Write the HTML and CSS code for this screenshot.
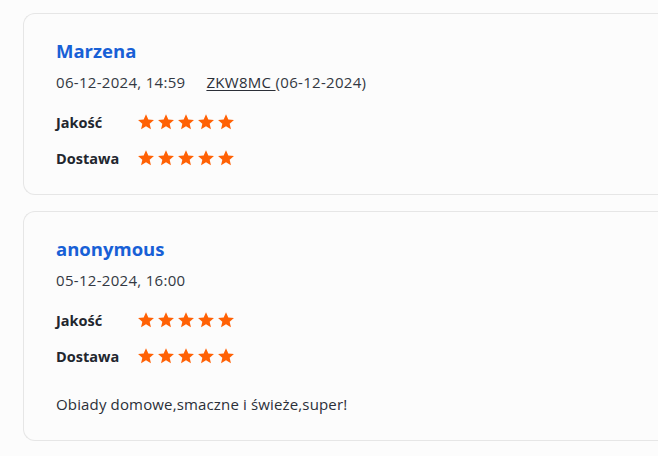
FILE: index.html
```html
<!DOCTYPE html>
<html lang="pl">
<head>
<meta charset="utf-8">
<link rel="stylesheet" href="styles.css">
</head>
<body>
<svg width="0" height="0" class="defs" aria-hidden="true">
  <defs>
    <symbol id="star" viewBox="0 0 24 24">
      <path d="M12 1.6l3.1 6.9 7.5.7-5.7 5 1.7 7.4L12 17.8l-6.6 3.8 1.7-7.4-5.7-5 7.5-.7z"/>
    </symbol>
  </defs>
</svg>
<main class="list">
  <article class="review">
    <h3 class="author">Marzena</h3>
    <div class="meta">
      <span class="date">06-12-2024, 14:59</span>
      <span class="order"><a class="order-link" href="#">ZKW8MC </a>(06-12-2024)</span>
    </div>
    <div class="ratings">
      <div class="rating"><span class="label">Jakość</span><span class="stars"><svg><use href="#star"/></svg><svg><use href="#star"/></svg><svg><use href="#star"/></svg><svg><use href="#star"/></svg><svg><use href="#star"/></svg></span></div>
      <div class="rating"><span class="label">Dostawa</span><span class="stars"><svg><use href="#star"/></svg><svg><use href="#star"/></svg><svg><use href="#star"/></svg><svg><use href="#star"/></svg><svg><use href="#star"/></svg></span></div>
    </div>
  </article>
  <article class="review">
    <h3 class="author">anonymous</h3>
    <div class="meta">
      <span class="date">05-12-2024, 16:00</span>
    </div>
    <div class="ratings">
      <div class="rating"><span class="label">Jakość</span><span class="stars"><svg><use href="#star"/></svg><svg><use href="#star"/></svg><svg><use href="#star"/></svg><svg><use href="#star"/></svg><svg><use href="#star"/></svg></span></div>
      <div class="rating"><span class="label">Dostawa</span><span class="stars"><svg><use href="#star"/></svg><svg><use href="#star"/></svg><svg><use href="#star"/></svg><svg><use href="#star"/></svg><svg><use href="#star"/></svg></span></div>
    </div>
    <p class="comment">Obiady domowe,smaczne i świeże,super!</p>
  </article>
</main>
</body>
</html>
```
FILE: styles.css
```css
html, body {
  margin: 0;
  padding: 0;
  background: #fcfcfc;
}
body {
  font-family: "Open Sans", "Noto Sans", sans-serif;
  color: #2b2f38;
  width: 658px;
  height: 456px;
  overflow: hidden;
}
.defs {
  position: absolute;
}
.list {
  display: flex;
  flex-direction: column;
  gap: 16px;
  padding: 13px 0 0 23px;
  width: 658px;
  box-sizing: border-box;
}
.review {
  border: 1px solid #e6e6e6;
  border-right: none;
  border-radius: 12px 0 0 12px;
  background: #fcfcfc;
  padding: 25px 32px 26px 32px;
}
.author {
  margin: 0;
  font-size: 18.5px;
  line-height: 24px;
  font-weight: 700;
  color: #1860d6;
}
.meta {
  display: flex;
  gap: 21px;
  margin-top: 9px;
  font-size: 15px;
  line-height: 20px;
  letter-spacing: 0.3px;
  color: #333842;
}
.order-link {
  color: #2b2f38;
  text-decoration: underline;
  text-underline-offset: 2px;
}
.ratings {
  display: flex;
  flex-direction: column;
  gap: 16px;
  margin-top: 20px;
}
.rating {
  display: flex;
  align-items: center;
  height: 20px;
}
.label {
  width: 81px;
  font-size: 14.5px;
  font-weight: 700;
  color: #22262e;
}
.stars {
  display: flex;
  gap: 2px;
}
.stars svg {
  width: 18px;
  height: 18px;
  fill: #ff6105;
}
.comment {
  margin: 28px 0 0;
  font-size: 15px;
  line-height: 20px;
  letter-spacing: 0.15px;
  color: #2b2f38;
}
```
